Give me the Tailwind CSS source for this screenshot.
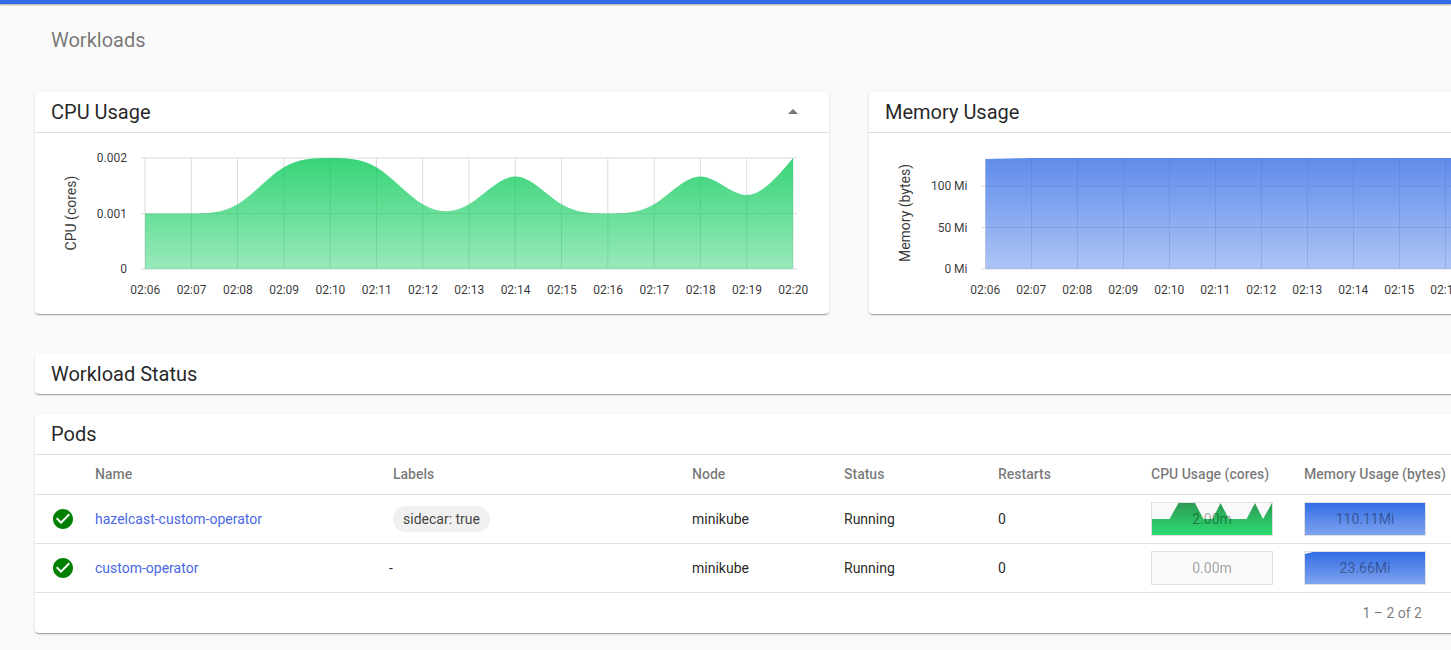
<!DOCTYPE html>
<html>
<head>
<meta charset="utf-8">
<title>Workloads</title>
<script src="https://cdn.jsdelivr.net/npm/@tailwindcss/browser@4"></script>
</head>
<body class="h-[650px] w-[1451px] overflow-hidden bg-[#fafafa] font-[family-name:Roboto,sans-serif] text-black/87">
    <div class="h-[4px] bg-[#326ce5] shadow-[0_1px_2px_rgba(0,0,0,.35)]"></div>

    <div class="h-[88px] pl-[51px] pt-[24px] text-[20px] leading-[24px] text-black/54">Workloads</div>

    <div class="ml-[35px] w-[1628px]">
        <!-- charts -->
        <div class="grid grid-cols-[794px_794px] gap-[40px]">
            <div class="h-[222px] rounded bg-white shadow-[0_2px_1px_-1px_rgba(0,0,0,.2),0_1px_1px_0_rgba(0,0,0,.14),0_1px_3px_0_rgba(0,0,0,.12)]">
                <div class="flex h-[41px] items-center justify-between border-b border-[#e0e0e0] pl-[16px] pr-[24px]">
                    <span class="text-[20px]">CPU Usage</span>
                    <svg class="h-6 w-6 fill-[#757575]" viewBox="0 0 24 24"><path d="M7 14l5-5 5 5z"/></svg>
                </div>
                <svg id="cpuChart" class="block h-[181px] w-[794px]" viewBox="0 0 794 181"></svg>
            </div>
            <div class="h-[222px] rounded bg-white shadow-[0_2px_1px_-1px_rgba(0,0,0,.2),0_1px_1px_0_rgba(0,0,0,.14),0_1px_3px_0_rgba(0,0,0,.12)]">
                <div class="flex h-[41px] items-center border-b border-[#e0e0e0] pl-[16px]">
                    <span class="text-[20px]">Memory Usage</span>
                </div>
                <svg id="memChart" class="block h-[181px] w-[794px]" viewBox="0 0 794 181"></svg>
            </div>
        </div>

        <!-- workload status -->
        <div class="mt-[40px] flex h-[40px] items-center rounded bg-white pl-[16px] text-[20px] shadow-[0_2px_1px_-1px_rgba(0,0,0,.2),0_1px_1px_0_rgba(0,0,0,.14),0_1px_3px_0_rgba(0,0,0,.12)]">Workload Status</div>

        <!-- pods -->
        <div class="mt-[20px] rounded bg-white text-[14px] shadow-[0_2px_1px_-1px_rgba(0,0,0,.2),0_1px_1px_0_rgba(0,0,0,.14),0_1px_3px_0_rgba(0,0,0,.12)]">
            <div class="flex h-[41px] items-center border-b border-[#e0e0e0] pl-[16px] text-[20px]">Pods</div>

            <div class="grid h-[40px] grid-cols-[60px_298px_299px_152px_154px_153px_153px_1fr] items-center border-b border-[#e0e0e0] text-[14px] font-medium text-black/54">
                <div></div>
                <div>Name</div>
                <div>Labels</div>
                <div>Node</div>
                <div>Status</div>
                <div>Restarts</div>
                <div>CPU Usage (cores)</div>
                <div class="whitespace-nowrap">Memory Usage (bytes)</div>
            </div>

            <div class="grid h-[49px] grid-cols-[60px_298px_299px_152px_154px_153px_153px_1fr] items-center border-b border-[#e0e0e0]">
                <div class="pl-[16px]">
                    <svg class="h-6 w-6 fill-[#008000]" viewBox="0 0 24 24"><circle cx="12" cy="12" r="7" class="fill-white"/><path d="M12 2C6.48 2 2 6.48 2 12s4.48 10 10 10 10-4.48 10-10S17.52 2 12 2zm-2 15l-5-5 1.41-1.41L10 14.17l7.59-7.59L19 8l-9 9z"/></svg>
                </div>
                <a class="text-[#4a68e6]">hazelcast-custom-operator</a>
                <div><span class="inline-flex h-[26px] items-center rounded-full bg-[#f0f0f0] px-[10px] text-black/75">sidecar: true</span></div>
                <div>minikube</div>
                <div>Running</div>
                <div>0</div>
                <div class="relative flex h-[34px] w-[122px] items-center justify-center border border-[#e0e0e0] bg-[#fafafa] text-black/38">
                    <svg class="absolute inset-0 h-[32px] w-[120px]" viewBox="0 0 120 32">
                        <defs><linearGradient id="sparkGreen" x1="0" y1="0" x2="0" y2="1"><stop offset="0" stop-color="#2e9a54"/><stop offset="1" stop-color="#2bdd71"/></linearGradient></defs>
                        <polygon fill="url(#sparkGreen)" points="0,16 17.5,16 26.5,0 43,0 51.5,16 60.5,16 68.5,0 77,16 94.5,16 103,0 111,16 120,0 120,32 0,32"/>
                    </svg>
                    <span class="relative">2.00m</span>
                </div>
                <div class="relative flex h-[34px] w-[122px] items-center justify-center border border-[#e0e0e0] bg-[#fafafa] text-black/38">
                    <div class="absolute inset-0 bg-gradient-to-b from-[#326ce5] to-[#80a4ee]"></div>
                    <span class="relative">110.11Mi</span>
                </div>
            </div>

            <div class="grid h-[49px] grid-cols-[60px_298px_299px_152px_154px_153px_153px_1fr] items-center border-b border-[#e0e0e0]">
                <div class="pl-[16px]">
                    <svg class="h-6 w-6 fill-[#008000]" viewBox="0 0 24 24"><circle cx="12" cy="12" r="7" class="fill-white"/><path d="M12 2C6.48 2 2 6.48 2 12s4.48 10 10 10 10-4.48 10-10S17.52 2 12 2zm-2 15l-5-5 1.41-1.41L10 14.17l7.59-7.59L19 8l-9 9z"/></svg>
                </div>
                <a class="text-[#4a68e6]">custom-operator</a>
                <div class="-ml-[4px]">-</div>
                <div>minikube</div>
                <div>Running</div>
                <div>0</div>
                <div class="flex h-[34px] w-[122px] items-center justify-center border border-[#e0e0e0] bg-[#fafafa] text-black/38">0.00m</div>
                <div class="relative flex h-[34px] w-[122px] items-center justify-center border border-[#e0e0e0] bg-[#fafafa] text-black/38">
                    <svg class="absolute inset-0 h-[32px] w-[120px]" viewBox="0 0 120 32">
                        <defs><linearGradient id="sparkBlue" x1="0" y1="0" x2="0" y2="1"><stop offset="0" stop-color="#326ce5"/><stop offset="1" stop-color="#80a4ee"/></linearGradient></defs>
                        <polygon fill="url(#sparkBlue)" points="0,2 8,0 120,0 120,32 0,32"/>
                    </svg>
                    <span class="relative">23.66Mi</span>
                </div>
            </div>

            <div class="flex h-[40px] w-[1387px] items-center justify-end text-black/54">1 – 2 of 2</div>
        </div>
    </div>

    <script>
        // svg coords are card relative: page x - 35 (or 869), page y - 133
        var labels = ['02:06','02:07','02:08','02:09','02:10','02:11','02:12','02:13','02:14','02:15','02:16','02:17','02:18','02:19','02:20']

        // same curve d3 calls curveBasis
        function basis(p){
            var d = 'M' + p[0][0] + ',' + p[0][1]
            d += 'L' + (5*p[0][0]+p[1][0])/6 + ',' + (5*p[0][1]+p[1][1])/6
            for(var i = 2; i < p.length; i++){
                var a = p[i-2], b = p[i-1], c = p[i]
                d += 'C' + (2*a[0]+b[0])/3 + ',' + (2*a[1]+b[1])/3 + ' ' + (a[0]+2*b[0])/3 + ',' + (a[1]+2*b[1])/3 + ' ' + (a[0]+4*b[0]+c[0])/6 + ',' + (a[1]+4*b[1]+c[1])/6
            }
            var y = p[p.length-2], z = p[p.length-1]
            d += 'C' + (2*y[0]+z[0])/3 + ',' + (2*y[1]+z[1])/3 + ' ' + (y[0]+2*z[0])/3 + ',' + (y[1]+2*z[1])/3 + ' ' + z[0] + ',' + z[1]
            return d
        }

        function drawChart(id, c){
            var out = '<defs><linearGradient id="' + id + 'Fill" gradientUnits="userSpaceOnUse" x1="0" y1="25" x2="0" y2="136">'
                + '<stop offset="0" stop-color="' + c.color + '" stop-opacity=".78"/><stop offset="1" stop-color="' + c.color + '" stop-opacity=".4"/></linearGradient></defs>'
            labels.forEach(function(l, i){
                var x = c.x0 + c.step*i
                out += '<line x1="' + x + '" x2="' + x + '" y1="25" y2="136" stroke="#dcdcdc"/>'
                out += '<text x="' + (c.labelX + c.step*i) + '" y="158" text-anchor="middle" dominant-baseline="middle" class="fill-black/80 text-[12px]">' + l + '</text>'
            })
            c.ticks.forEach(function(t){
                out += '<line x1="' + (c.x0-4) + '" x2="' + (c.x1+4) + '" y1="' + t[1] + '" y2="' + t[1] + '" stroke="#dcdcdc"/>'
                out += '<text x="' + (c.x0-18) + '" y="' + (t[1]+1) + '" text-anchor="end" dominant-baseline="middle" class="fill-black/80 text-[12px]">' + t[0] + '</text>'
            })
            out += '<path fill="url(#' + id + 'Fill)" d="' + c.line + 'L' + c.x1 + ',136L' + c.x0 + ',136Z"/>'
            out += '<text transform="translate(' + c.axisX + ',80) rotate(-90)" text-anchor="middle" dominant-baseline="middle" class="fill-black/80 text-[14px]">' + c.axis + '</text>'
            document.getElementById(id).innerHTML = out
        }

        var cpu = [1,1,1,2,2,2,1,1,2,1,1,1,2,1,2]
        var cpuStep = 648/14
        drawChart('cpuChart', {
            color: '#00c853', x0: 110, x1: 758, step: cpuStep, labelX: 110.3, axisX: 37, axis: 'CPU (cores)',
            ticks: [['0.002',25],['0.001',80.5],['0',136]],
            line: basis(cpu.map(function(v, i){ return [110 + cpuStep*i, 136 - v*55.5] }))
        })

        drawChart('memChart', {
            color: '#326ce5', x0: 116.5, x1: 760, step: 46, labelX: 116.2, axisX: 37, axis: 'Memory (bytes)',
            ticks: [['100 Mi',53],['50 Mi',94.5],['0 Mi',136]],
            line: 'M116.5,26L162,25L760,25'
        })
    </script>
</body>
</html>
